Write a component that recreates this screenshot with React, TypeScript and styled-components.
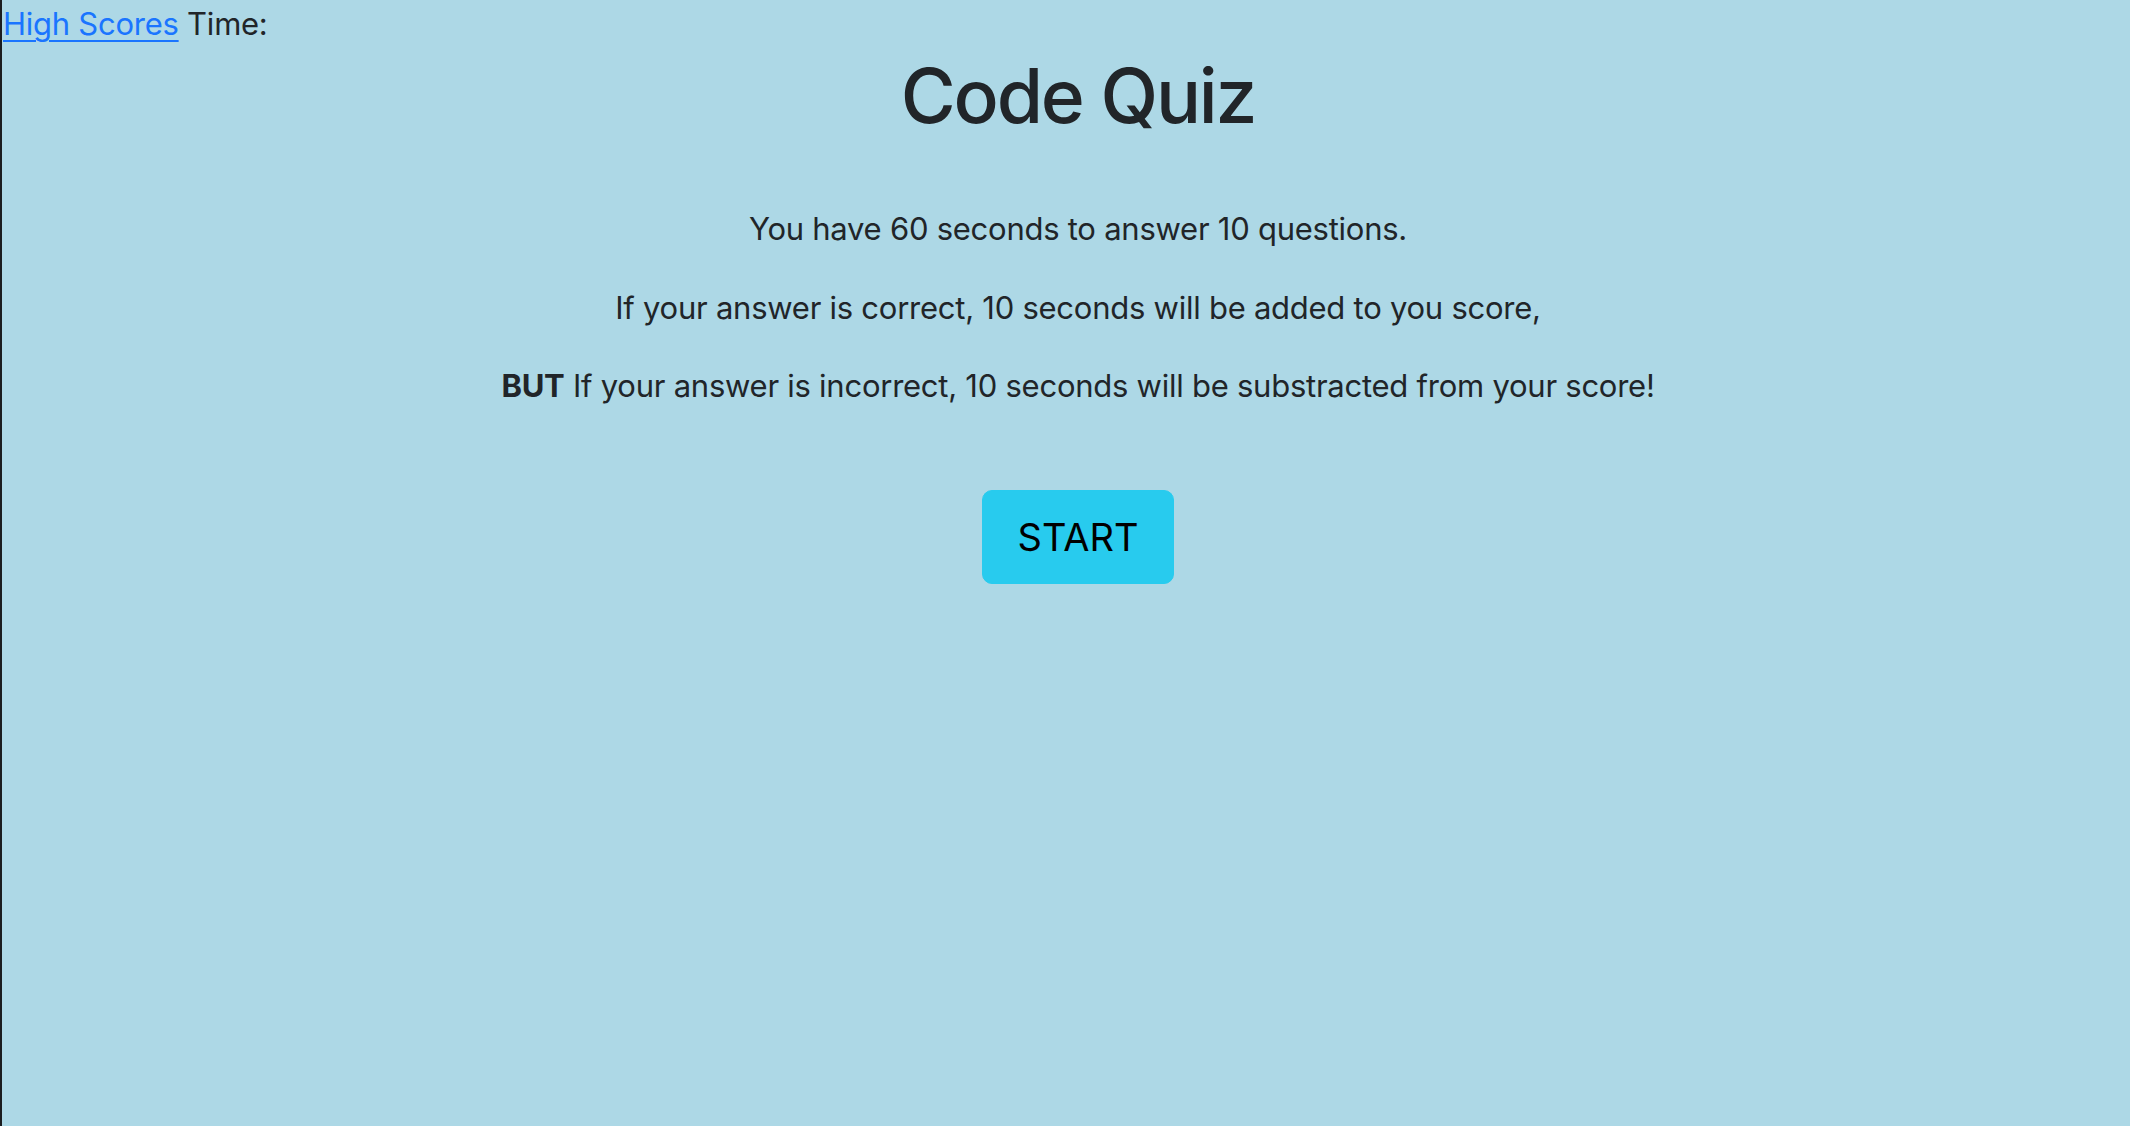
import React from 'react'
import styled, { createGlobalStyle } from 'styled-components'

const GlobalStyle = createGlobalStyle`
    html, body {
        margin: 0;
        padding: 0;
        background: #add8e6;
    }
    body {
        font-family: Inter, "Noto Sans", "Liberation Sans", sans-serif;
        font-size: 31px;
        letter-spacing: -0.25px;
        line-height: 1.5;
        color: #212529;
    }
`

const Page = styled.div`
    min-height: 100vh;
    box-sizing: border-box;
    border-left: 2px solid #1b1d1f;
`
const Header = styled.header`
    padding-left: 1px;
    height: 48px;
    line-height: 48px;
`
const ScoresLink = styled.a`
    color: #1a75ff;
    text-decoration: underline;
    text-underline-offset: 5px;
    text-decoration-thickness: 2px;
`
const Main = styled.main`
    text-align: center;
    padding-left: 24px;
`
const Title = styled.h1`
    margin: 0 0 62px;
    font-size: 75px;
    font-weight: 500;
    line-height: 96px;
    letter-spacing: -2.2px;
`
const Text = styled.p`
    margin: 0 0 32px;
`
const StartButton = styled.button`
    margin-top: 48px;
    padding: 16px 35px;
    font-family: inherit;
    font-size: 38px;
    line-height: 60px;
    letter-spacing: 0;
    color: #000;
    background: #28cbee;
    border: 1px solid #28cbee;
    border-radius: 10px;
    cursor: pointer;
`

export default function App() {
    return (
        <Page>
            <GlobalStyle />
            <Header>
                <ScoresLink href="#">High Scores</ScoresLink> Time:
            </Header>
            <Main>
                <Title>Code Quiz</Title>
                <Text>You have 60 seconds to answer 10 questions.</Text>
                <Text>If your answer is correct, 10 seconds will be added to you score,</Text>
                <Text>
                    <b>BUT</b> If your answer is incorrect, 10 seconds will be substracted from your score!
                </Text>
                <StartButton>START</StartButton>
            </Main>
        </Page>
    )
}
